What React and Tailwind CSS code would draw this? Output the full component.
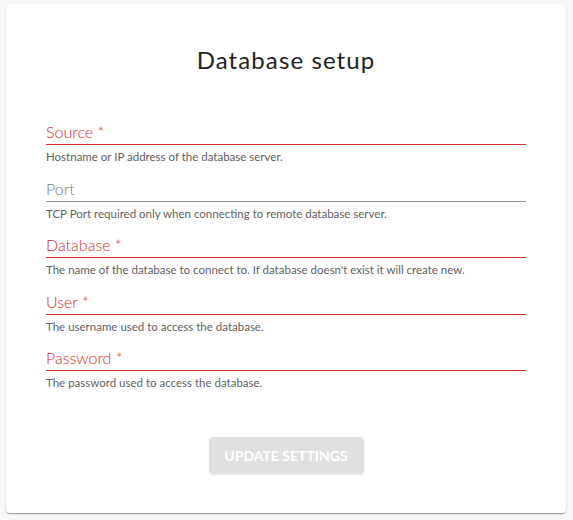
import React from "react";

const fields = [
  { label: "Source *", help: "Hostname or IP address of the database server.", error: true },
  { label: "Port", help: "TCP Port required only when connecting to remote database server.", error: false },
  { label: "Database *", help: "The name of the database to connect to. If database doesn't exist it will create new.", error: true },
  { label: "User *", help: "The username used to access the database.", error: true },
  { label: "Password *", help: "The password used to access the database.", error: true },
];

export default function App() {
  return (
    <div className="min-h-[520px] w-[573px] bg-[#f8f8f8] pt-[4px] pl-[6px]" style={{ fontFamily: "Lato, 'Open Sans', sans-serif" }}>
      <div className="w-[560px] h-[509px] bg-white rounded-[4px] shadow-[0_2px_1px_-1px_rgba(0,0,0,0.2),0_1px_1px_0_rgba(0,0,0,0.14),0_1px_3px_0_rgba(0,0,0,0.12)] px-[40px] pt-[40px] flex flex-col">
        <h1 className="text-center text-[24px] leading-[32px] tracking-[1.1px] text-[#222222] font-normal">Database setup</h1>
        <div className="mt-[45px] flex flex-col">
          {fields.map((f) => (
            <div key={f.label} className="h-[56.5px]">
              <div
                className={
                  f.error
                    ? "h-[24px] leading-[21px] text-[16px] font-light text-[#d32f2f] border-b-[1.5px] border-[#d32f2f]"
                    : "h-[24px] leading-[21px] text-[16px] font-light text-[#7a7a7a] border-b border-[#949494]"
                }
              >
                {f.label}
              </div>
              <div className="mt-[4px] text-[11.5px] leading-[16px] text-[#5f5f5f]">{f.help}</div>
            </div>
          ))}
        </div>
        <div className="mt-auto mb-[39px] flex justify-center">
          <button className="w-[155px] h-[37px] rounded-[4px] bg-[#e0e0e0] text-white font-bold text-[14px] uppercase shadow-[0_1px_2px_rgba(0,0,0,0.1)]">
            Update settings
          </button>
        </div>
      </div>
    </div>
  );
}
